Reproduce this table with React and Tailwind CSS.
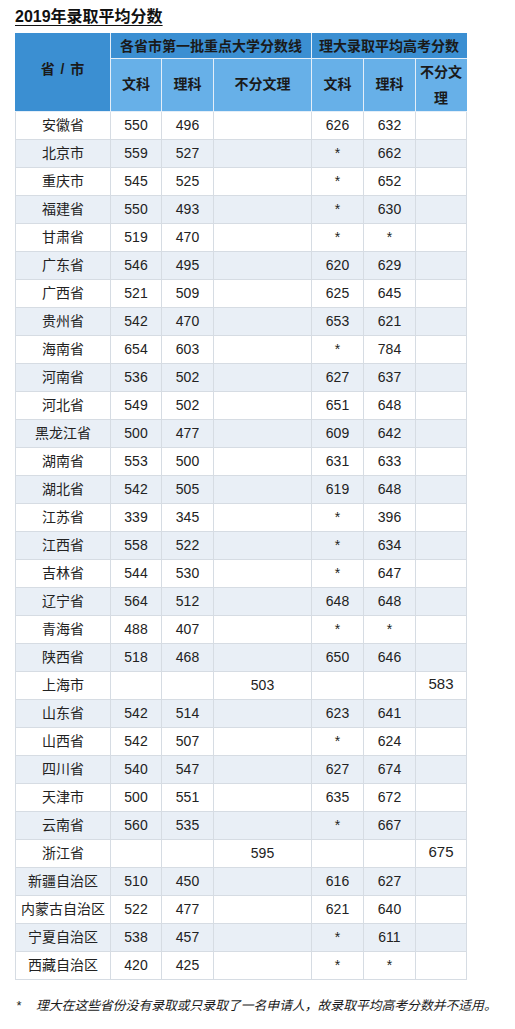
import React from "react";

const rows = [
  ["安徽省", "550", "496", "", "626", "632", ""],
  ["北京市", "559", "527", "", "*", "662", ""],
  ["重庆市", "545", "525", "", "*", "652", ""],
  ["福建省", "550", "493", "", "*", "630", ""],
  ["甘肃省", "519", "470", "", "*", "*", ""],
  ["广东省", "546", "495", "", "620", "629", ""],
  ["广西省", "521", "509", "", "625", "645", ""],
  ["贵州省", "542", "470", "", "653", "621", ""],
  ["海南省", "654", "603", "", "*", "784", ""],
  ["河南省", "536", "502", "", "627", "637", ""],
  ["河北省", "549", "502", "", "651", "648", ""],
  ["黑龙江省", "500", "477", "", "609", "642", ""],
  ["湖南省", "553", "500", "", "631", "633", ""],
  ["湖北省", "542", "505", "", "619", "648", ""],
  ["江苏省", "339", "345", "", "*", "396", ""],
  ["江西省", "558", "522", "", "*", "634", ""],
  ["吉林省", "544", "530", "", "*", "647", ""],
  ["辽宁省", "564", "512", "", "648", "648", ""],
  ["青海省", "488", "407", "", "*", "*", ""],
  ["陕西省", "518", "468", "", "650", "646", ""],
  ["上海市", "", "", "503", "", "", "583"],
  ["山东省", "542", "514", "", "623", "641", ""],
  ["山西省", "542", "507", "", "*", "624", ""],
  ["四川省", "540", "547", "", "627", "674", ""],
  ["天津市", "500", "551", "", "635", "672", ""],
  ["云南省", "560", "535", "", "*", "667", ""],
  ["浙江省", "", "", "595", "", "", "675"],
  ["新疆自治区", "510", "450", "", "616", "627", ""],
  ["内蒙古自治区", "522", "477", "", "621", "640", ""],
  ["宁夏自治区", "538", "457", "", "*", "611", ""],
  ["西藏自治区", "420", "425", "", "*", "*", ""],
];

const font = { fontFamily: '"Liberation Sans", "Noto Sans CJK SC", sans-serif' };

export default function App() {
  return (
    <div className="w-[515px] h-[1029px] bg-white text-[#222] overflow-hidden" style={font}>
      <div className="px-[15px] pt-[7px]">
        <h1 className="text-[16px] leading-[20px] font-bold underline underline-offset-[3px] text-[#111]">
          2019年录取平均分数
        </h1>

        {/* score table */}
        <table className="mt-[6px] border-collapse table-fixed w-[451px] text-[14px] text-center">
          <colgroup>
            <col className="w-[95px]" />
            <col className="w-[51px]" />
            <col className="w-[52px]" />
            <col className="w-[98px]" />
            <col className="w-[52px]" />
            <col className="w-[52px]" />
            <col className="w-[51px]" />
          </colgroup>
          <thead className="font-bold text-[#1a1a1a]">
            <tr className="h-[25px]">
              <th rowSpan={2} className="bg-[#3b8fd2] border border-[#e4eef8] border-t-[#3b8fd2] border-l-[#3b8fd2] pb-[6px] tracking-[1px]">
                省 / 市
              </th>
              <th colSpan={3} className="bg-[#3b8fd2] border border-[#e4eef8] border-t-[#3b8fd2]">
                各省市第一批重点大学分数线
              </th>
              <th colSpan={3} className="bg-[#3b8fd2] border border-[#e4eef8] border-t-[#3b8fd2] border-r-[#3b8fd2]">
                理大录取平均高考分数
              </th>
            </tr>
            <tr className="h-[52px]">
              <th className="bg-[#67b0e8] border border-[#e4eef8] pb-[2px]">文科</th>
              <th className="bg-[#67b0e8] border border-[#e4eef8] pb-[2px]">理科</th>
              <th className="bg-[#67b0e8] border border-[#e4eef8] pb-[2px]">不分文理</th>
              <th className="bg-[#67b0e8] border border-[#e4eef8] pb-[2px]">文科</th>
              <th className="bg-[#67b0e8] border border-[#e4eef8] pb-[2px]">理科</th>
              <th className="bg-[#67b0e8] border border-[#e4eef8] border-r-[#67b0e8] leading-[26px] px-1">
                不分文理
              </th>
            </tr>
          </thead>
          <tbody>
            {rows.map((r, i) => (
              <tr key={r[0]} className={i % 2 === 1 ? "h-[28px] bg-[#e9eff6]" : "h-[28px] bg-white"}>
                {r.map((c, j) => (
                  <td
                    key={j}
                    className={
                      j === 6 && c
                        ? "border border-[#d6dce3] p-0 text-[15px] pb-[3px]"
                        : "border border-[#d6dce3] p-0"
                    }
                  >
                    {c}
                  </td>
                ))}
              </tr>
            ))}
          </tbody>
        </table>

        <p className="mt-[16px] flex whitespace-nowrap text-[12.8px] italic text-[#1a1a1a]">
          <span className="w-[21px] pl-[1px]">*</span>
          <span>理大在这些省份没有录取或只录取了一名申请人，故录取平均高考分数并不适用。</span>
        </p>
      </div>
    </div>
  );
}
